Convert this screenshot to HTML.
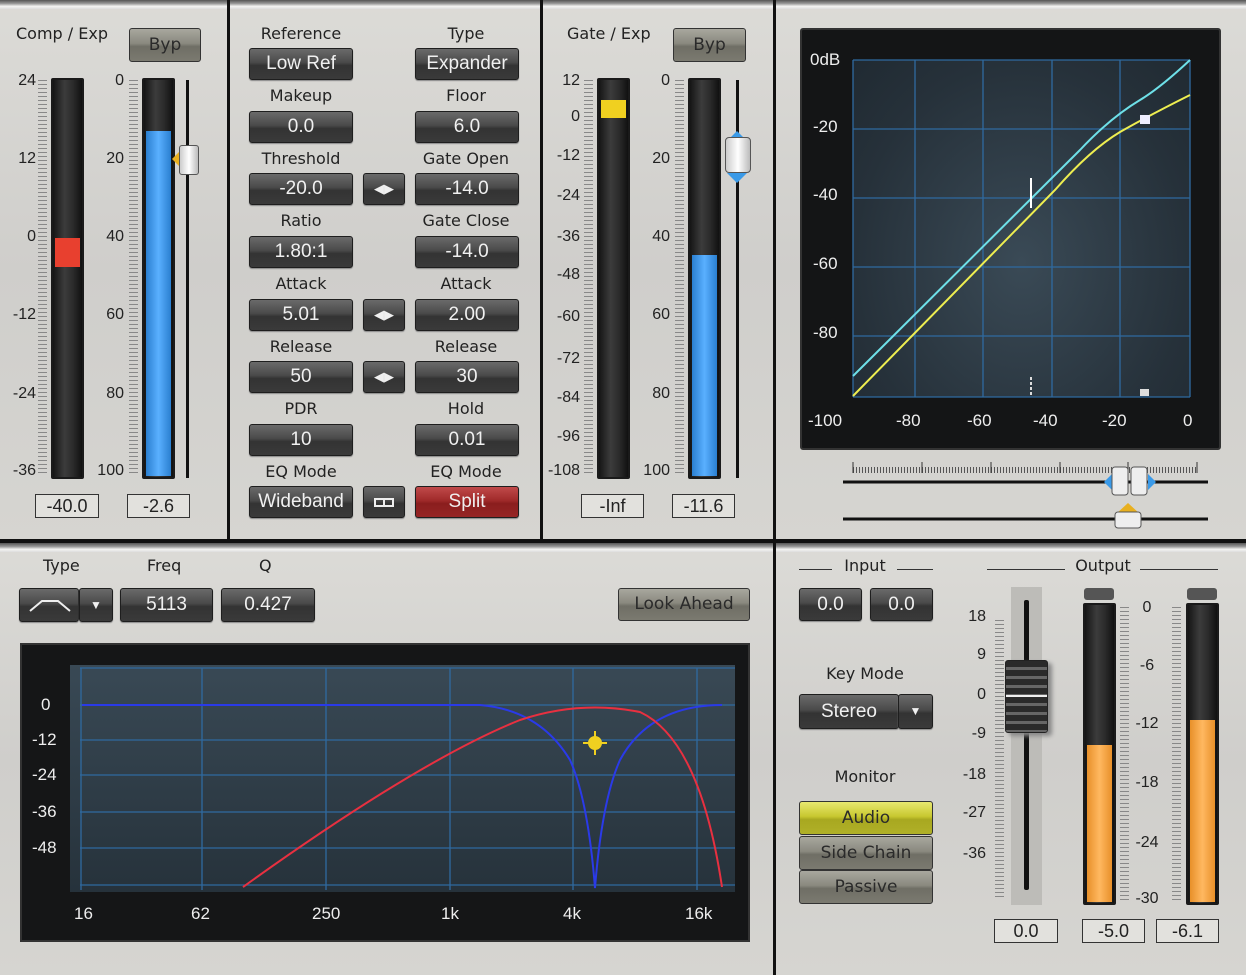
<!DOCTYPE html>
<html><head><meta charset="utf-8"><style>
*{margin:0;padding:0;box-sizing:border-box}
body{width:1246px;height:975px;overflow:hidden;background:#111;font-family:"DejaVu Sans","Liberation Sans",sans-serif;position:relative}
.a{position:absolute}
.pan{position:absolute;background:linear-gradient(180deg,#dcdbd7,#cfcecb 50%,#d6d5d1);}
.pan:before{content:"";position:absolute;left:0;right:0;top:0;height:9px;background:linear-gradient(#555,#999 40%,#f4f4f2 70%,#ddd)}
.lab{position:absolute;font-size:16px;color:#222;text-align:center;white-space:nowrap}
.btn{position:absolute;background:linear-gradient(#6a6a6a,#4a4a4a 45%,#333 55%,#3a3a3a);border:1px solid #1e1e1e;border-radius:3px;color:#f0f0f0;font-size:19px;text-align:center;font-family:"Liberation Sans",sans-serif;box-shadow:0 1px 1px #888}
.gb{position:absolute;background:linear-gradient(#a8a79e,#8a897f 45%,#6f6e65 55%,#7b7a70);border:1px solid #333;border-radius:3px;color:#2a2a2a;font-size:17px;text-align:center}
.val{position:absolute;border:1px solid #333;background:#e2e1dd;font-size:18px;text-align:center;color:#222;line-height:22px;font-family:"Liberation Sans",sans-serif}
.met{position:absolute;background:linear-gradient(90deg,#151515,#3c3c3c 40%,#2a2a2a 70%,#111);border:2px solid #1a1a1a;border-radius:2px}
.sc{position:absolute;font-size:16px;color:#222;text-align:right;width:36px;font-family:"Liberation Sans",sans-serif}
.tk{position:absolute;width:9px;background:repeating-linear-gradient(180deg,#888 0 1px,transparent 1px 4px)}
.vl{position:absolute;width:3px;background:#111}
.gl{position:absolute;color:#eee;font-size:17px;font-family:"Liberation Sans",sans-serif}
</style></head><body>

<!-- Panel 1 -->
<div class="pan" style="left:0;top:0;width:227px;height:539px"></div>
<div class="lab" style="left:16px;top:24px">Comp / Exp</div>
<div class="gb" style="left:129px;top:28px;width:72px;height:34px;line-height:32px">Byp</div>
<div class="met" style="left:51px;top:78px;width:33px;height:401px"></div>
<div class="a" style="left:55px;top:238px;width:25px;height:29px;background:#e8402f"></div>
<div class="met" style="left:142px;top:78px;width:33px;height:401px"></div>
<div class="a" style="left:146px;top:131px;width:25px;height:345px;background:linear-gradient(90deg,#2a7fd0,#5ab0ff 50%,#2a7fd0)"></div>
<div class="tk" style="left:38px;top:80px;height:396px"></div>
<div class="tk" style="left:129px;top:80px;height:396px"></div>
<div class="sc" style="left:0;top:72px">24</div><div class="sc" style="left:0;top:150px">12</div><div class="sc" style="left:0;top:228px">0</div><div class="sc" style="left:0;top:306px">-12</div><div class="sc" style="left:0;top:385px">-24</div><div class="sc" style="left:0;top:462px">-36</div>
<div class="sc" style="left:88px;top:72px">0</div><div class="sc" style="left:88px;top:150px">20</div><div class="sc" style="left:88px;top:228px">40</div><div class="sc" style="left:88px;top:306px">60</div><div class="sc" style="left:88px;top:385px">80</div><div class="sc" style="left:88px;top:462px">100</div>
<div class="vl" style="left:186px;top:80px;height:398px"></div>
<div class="a" style="left:164px;top:151px;width:0;height:0;border:8px solid transparent;border-right-color:#e8b020"></div>
<div class="a" style="left:179px;top:145px;width:20px;height:30px;background:linear-gradient(90deg,#ccc,#fff,#bbb);border:1px solid #555;border-radius:3px"></div>
<div class="val" style="left:35px;top:494px;width:64px;height:24px">-40.0</div>
<div class="val" style="left:127px;top:494px;width:63px;height:24px">-2.6</div>

<!-- Panel 2 -->
<div class="pan" style="left:230px;top:0;width:310px;height:539px"></div>
<div class="lab" style="left:251px;width:100px;top:24px">Reference</div><div class="lab" style="left:416px;width:100px;top:24px">Type</div>
<div class="btn" style="left:249px;top:48px;width:104px;height:32px;line-height:30px">Low Ref</div><div class="btn" style="left:415px;top:48px;width:104px;height:32px;line-height:30px">Expander</div>
<div class="lab" style="left:251px;width:100px;top:86px">Makeup</div><div class="lab" style="left:416px;width:100px;top:86px">Floor</div>
<div class="btn" style="left:249px;top:111px;width:104px;height:32px;line-height:30px">0.0</div><div class="btn" style="left:415px;top:111px;width:104px;height:32px;line-height:30px">6.0</div>
<div class="lab" style="left:251px;width:100px;top:149px">Threshold</div><div class="lab" style="left:416px;width:100px;top:149px">Gate Open</div>
<div class="btn" style="left:249px;top:173px;width:104px;height:32px;line-height:30px">-20.0</div><div class="btn" style="left:415px;top:173px;width:104px;height:32px;line-height:30px">-14.0</div>
<div class="lab" style="left:251px;width:100px;top:211px">Ratio</div><div class="lab" style="left:416px;width:100px;top:211px">Gate Close</div>
<div class="btn" style="left:249px;top:236px;width:104px;height:32px;line-height:30px">1.80:1</div><div class="btn" style="left:415px;top:236px;width:104px;height:32px;line-height:30px">-14.0</div>
<div class="lab" style="left:251px;width:100px;top:274px">Attack</div><div class="lab" style="left:416px;width:100px;top:274px">Attack</div>
<div class="btn" style="left:249px;top:299px;width:104px;height:32px;line-height:30px">5.01</div><div class="btn" style="left:415px;top:299px;width:104px;height:32px;line-height:30px">2.00</div>
<div class="lab" style="left:251px;width:100px;top:337px">Release</div><div class="lab" style="left:416px;width:100px;top:337px">Release</div>
<div class="btn" style="left:249px;top:361px;width:104px;height:32px;line-height:30px">50</div><div class="btn" style="left:415px;top:361px;width:104px;height:32px;line-height:30px">30</div>
<div class="lab" style="left:251px;width:100px;top:399px">PDR</div><div class="lab" style="left:416px;width:100px;top:399px">Hold</div>
<div class="btn" style="left:249px;top:424px;width:104px;height:32px;line-height:30px">10</div><div class="btn" style="left:415px;top:424px;width:104px;height:32px;line-height:30px">0.01</div>
<div class="lab" style="left:251px;width:100px;top:462px">EQ Mode</div><div class="lab" style="left:416px;width:100px;top:462px">EQ Mode</div>
<div class="btn" style="left:249px;top:486px;width:104px;height:32px;line-height:30px">Wideband</div>
<div class="btn" style="left:415px;top:486px;width:104px;height:32px;line-height:30px;background:linear-gradient(#c04a4a,#a02a2a 45%,#8a1e1e 55%,#962424)">Split</div>
<div class="btn" style="left:363px;top:173px;width:42px;height:32px;font-size:13px;line-height:30px">◀▶</div>
<div class="btn" style="left:363px;top:299px;width:42px;height:32px;font-size:13px;line-height:30px">◀▶</div>
<div class="btn" style="left:363px;top:361px;width:42px;height:32px;font-size:13px;line-height:30px">◀▶</div>
<div class="btn" style="left:363px;top:486px;width:42px;height:32px"><div class="a" style="left:10px;top:11px;width:20px;height:9px;border:2px solid #eee"></div><div class="a" style="left:19px;top:11px;width:2px;height:9px;background:#eee"></div></div>

<!-- Panel 3 -->
<div class="pan" style="left:543px;top:0;width:230px;height:539px"></div>
<div class="lab" style="left:567px;top:24px">Gate / Exp</div>
<div class="gb" style="left:673px;top:28px;width:73px;height:34px;line-height:32px">Byp</div>
<div class="met" style="left:597px;top:78px;width:33px;height:401px"></div>
<div class="a" style="left:601px;top:100px;width:25px;height:18px;background:#f0d020"></div>
<div class="met" style="left:688px;top:78px;width:33px;height:401px"></div>
<div class="a" style="left:692px;top:255px;width:25px;height:221px;background:linear-gradient(90deg,#2a7fd0,#5ab0ff 50%,#2a7fd0)"></div>
<div class="tk" style="left:584px;top:80px;height:396px"></div>
<div class="tk" style="left:675px;top:80px;height:396px"></div>
<div class="sc" style="left:544px;top:72px">12</div><div class="sc" style="left:544px;top:108px">0</div><div class="sc" style="left:544px;top:147px">-12</div><div class="sc" style="left:544px;top:187px">-24</div><div class="sc" style="left:544px;top:228px">-36</div><div class="sc" style="left:544px;top:266px">-48</div><div class="sc" style="left:544px;top:308px">-60</div><div class="sc" style="left:544px;top:350px">-72</div><div class="sc" style="left:544px;top:389px">-84</div><div class="sc" style="left:544px;top:428px">-96</div><div class="sc" style="left:544px;top:462px">-108</div>
<div class="sc" style="left:634px;top:72px">0</div><div class="sc" style="left:634px;top:150px">20</div><div class="sc" style="left:634px;top:228px">40</div><div class="sc" style="left:634px;top:306px">60</div><div class="sc" style="left:634px;top:385px">80</div><div class="sc" style="left:634px;top:462px">100</div>
<div class="vl" style="left:736px;top:80px;height:398px"></div>
<div class="a" style="left:727px;top:121px;width:0;height:0;border:10px solid transparent;border-bottom-color:#3a9ae8"></div>
<div class="a" style="left:725px;top:137px;width:26px;height:36px;background:linear-gradient(90deg,#ccc,#fff,#bbb);border:1px solid #555;border-radius:4px"></div>
<div class="a" style="left:727px;top:173px;width:0;height:0;border:10px solid transparent;border-top-color:#3a9ae8"></div>
<div class="val" style="left:581px;top:494px;width:63px;height:24px">-Inf</div>
<div class="val" style="left:672px;top:494px;width:63px;height:24px">-11.6</div>

<!-- Panel 4 -->
<div class="pan" style="left:776px;top:0;width:470px;height:539px"></div>
<div class="a" style="left:800px;top:28px;width:421px;height:422px;background:#141516;border:2px solid #333;border-radius:3px"></div>
<div class="a" style="left:853px;top:60px;width:337px;height:337px;background:radial-gradient(ellipse at 50% 60%,#3a4a56,#26313a 70%,#202a32)"></div>
<svg class="a" style="left:0;top:0" width="1246" height="540">
<g stroke="#2f6aa0" stroke-width="1.3">
<line x1="853" y1="60" x2="1190" y2="60"/><line x1="853" y1="129" x2="1190" y2="129"/><line x1="853" y1="198" x2="1190" y2="198"/><line x1="853" y1="267" x2="1190" y2="267"/><line x1="853" y1="336" x2="1190" y2="336"/><line x1="853" y1="397" x2="1190" y2="397"/>
<line x1="853" y1="60" x2="853" y2="397"/><line x1="915" y1="60" x2="915" y2="397"/><line x1="983" y1="60" x2="983" y2="397"/><line x1="1052" y1="60" x2="1052" y2="397"/><line x1="1120" y1="60" x2="1120" y2="397"/><line x1="1190" y1="60" x2="1190" y2="397"/></g>
<path d="M853 376 L1080 150 Q1110 118 1140 100 Q1160 88 1190 60" stroke="#6ee0e8" stroke-width="2" fill="none"/>
<path d="M853 396 L1055 190 Q1090 150 1120 132 Q1150 115 1190 95" stroke="#eeee50" stroke-width="2" fill="none"/>
<rect x="1140" y="115" width="10" height="9" fill="#eef"/><line x1="1031" y1="178" x2="1031" y2="208" stroke="#fff" stroke-width="2"/>
<line x1="1031" y1="377" x2="1031" y2="395" stroke="#ddd" stroke-width="2" stroke-dasharray="3 2"/><rect x="1140" y="389" width="9" height="7" fill="#ddd"/>
<line x1="853" y1="470" x2="1197" y2="470" stroke="#555" stroke-width="6" stroke-dasharray="1 2"/>
<line x1="853" y1="462" x2="853" y2="473" stroke="#333"/><line x1="922" y1="462" x2="922" y2="473" stroke="#333"/><line x1="991" y1="462" x2="991" y2="473" stroke="#333"/><line x1="1060" y1="462" x2="1060" y2="473" stroke="#333"/><line x1="1128" y1="462" x2="1128" y2="473" stroke="#333"/><line x1="1197" y1="462" x2="1197" y2="473" stroke="#333"/>
<line x1="843" y1="482" x2="1208" y2="482" stroke="#111" stroke-width="3"/>
<line x1="843" y1="519" x2="1208" y2="519" stroke="#111" stroke-width="3"/>
<path d="M1104 482 L1112 474 L1112 490Z M1156 482 L1148 474 L1148 490Z" fill="#3a9ae8"/>
<rect x="1112" y="467" width="16" height="28" rx="3" fill="#eee" stroke="#555"/><rect x="1131" y="467" width="16" height="28" rx="3" fill="#eee" stroke="#555"/>
<path d="M1128 503 L1140 514 L1116 514Z" fill="#e8b020"/><rect x="1115" y="512" width="26" height="16" rx="3" fill="#eee" stroke="#555"/>
</svg>
<div class="gl" style="left:810px;top:50px">0dB</div><div class="gl" style="left:813px;top:117px">-20</div><div class="gl" style="left:813px;top:185px">-40</div><div class="gl" style="left:813px;top:254px">-60</div><div class="gl" style="left:813px;top:323px">-80</div>
<div class="gl" style="left:808px;top:411px">-100</div><div class="gl" style="left:896px;top:411px">-80</div><div class="gl" style="left:967px;top:411px">-60</div><div class="gl" style="left:1033px;top:411px">-40</div><div class="gl" style="left:1102px;top:411px">-20</div><div class="gl" style="left:1183px;top:411px">0</div>

<!-- Bottom left -->
<div class="pan" style="left:0;top:543px;width:773px;height:432px"></div>
<div class="lab" style="left:43px;top:556px">Type</div><div class="lab" style="left:147px;top:556px">Freq</div><div class="lab" style="left:259px;top:556px">Q</div>
<div class="btn" style="left:19px;top:588px;width:60px;height:34px"><svg width="60" height="32"><path d="M10 22 L22 12 L38 12 L50 22" stroke="#eee" stroke-width="2" fill="none"/></svg></div>
<div class="btn" style="left:79px;top:588px;width:34px;height:34px;font-size:12px;line-height:32px">▼</div>
<div class="btn" style="left:120px;top:588px;width:93px;height:34px;line-height:32px">5113</div>
<div class="btn" style="left:221px;top:588px;width:94px;height:34px;line-height:32px">0.427</div>
<div class="gb" style="left:618px;top:588px;width:132px;height:33px;line-height:31px">Look Ahead</div>
<div class="a" style="left:20px;top:643px;width:730px;height:299px;background:#151617;border:2px solid #333"></div>
<div class="a" style="left:70px;top:665px;width:665px;height:227px;background:linear-gradient(#394955,#26323b)"></div>
<svg class="a" style="left:0;top:543px" width="773" height="432">
<g stroke="#2f6aa0" stroke-width="1.3" transform="translate(0,-543)">
<line x1="80" y1="668" x2="735" y2="668"/><line x1="80" y1="705" x2="735" y2="705"/><line x1="80" y1="740" x2="735" y2="740"/><line x1="80" y1="775" x2="735" y2="775"/><line x1="80" y1="812" x2="735" y2="812"/><line x1="80" y1="848" x2="735" y2="848"/><line x1="80" y1="885" x2="735" y2="885"/>
<line x1="81" y1="668" x2="81" y2="890"/><line x1="202" y1="668" x2="202" y2="890"/><line x1="326" y1="668" x2="326" y2="890"/><line x1="450" y1="668" x2="450" y2="890"/><line x1="573" y1="668" x2="573" y2="890"/><line x1="697" y1="668" x2="697" y2="890"/>
</g>
<g transform="translate(0,-543)">
<path d="M82 705 L480 705 Q540 710 570 760 Q588 800 595 888 Q602 800 620 760 Q650 705 722 705" stroke="#2a3ae8" stroke-width="2" fill="none"/>
<path d="M243 887 Q420 760 520 720 Q580 700 640 712 Q700 740 722 887" stroke="#e83040" stroke-width="2" fill="none"/>
<circle cx="595" cy="743" r="7" fill="#f0d020"/>
<g stroke="#f0d020" stroke-width="2"><line x1="595" y1="731" x2="595" y2="755"/><line x1="583" y1="743" x2="607" y2="743"/></g>
</g></svg>
<div class="gl" style="left:41px;top:695px">0</div><div class="gl" style="left:32px;top:730px">-12</div><div class="gl" style="left:32px;top:765px">-24</div><div class="gl" style="left:32px;top:802px">-36</div><div class="gl" style="left:32px;top:838px">-48</div>
<div class="gl" style="left:74px;top:904px">16</div><div class="gl" style="left:191px;top:904px">62</div><div class="gl" style="left:312px;top:904px">250</div><div class="gl" style="left:441px;top:904px">1k</div><div class="gl" style="left:563px;top:904px">4k</div><div class="gl" style="left:685px;top:904px">16k</div>

<!-- Bottom right -->
<div class="pan" style="left:776px;top:543px;width:470px;height:432px"></div>
<div class="a" style="left:799px;top:569px;width:33px;height:1px;background:#333"></div><div class="a" style="left:897px;top:569px;width:36px;height:1px;background:#333"></div>
<div class="lab" style="left:815px;width:100px;top:556px">Input</div>
<div class="a" style="left:987px;top:569px;width:78px;height:1px;background:#333"></div><div class="a" style="left:1140px;top:569px;width:78px;height:1px;background:#333"></div>
<div class="lab" style="left:1053px;width:100px;top:556px">Output</div>
<div class="btn" style="left:799px;top:588px;width:63px;height:33px;line-height:31px">0.0</div>
<div class="btn" style="left:870px;top:588px;width:63px;height:33px;line-height:31px">0.0</div>
<div class="lab" style="left:815px;width:100px;top:664px">Key Mode</div>
<div class="btn" style="left:799px;top:694px;width:100px;height:35px;line-height:33px">Stereo</div>
<div class="btn" style="left:898px;top:694px;width:35px;height:35px;font-size:12px;line-height:33px">▼</div>
<div class="lab" style="left:815px;width:100px;top:767px">Monitor</div>
<div class="gb" style="left:799px;top:801px;width:134px;height:34px;line-height:32px;background:linear-gradient(#e8e870,#c8c830 45%,#a8a820 55%,#b0b028)">Audio</div>
<div class="gb" style="left:799px;top:836px;width:134px;height:34px;line-height:32px">Side Chain</div>
<div class="gb" style="left:799px;top:870px;width:134px;height:34px;line-height:32px">Passive</div>
<div class="a" style="left:1011px;top:587px;width:31px;height:318px;background:#bdbcb8"></div>
<div class="vl" style="left:1024px;top:600px;width:5px;height:290px;border-radius:2px"></div>
<div class="tk" style="left:995px;top:620px;height:280px"></div>
<div class="sc" style="left:950px;top:608px">18</div><div class="sc" style="left:950px;top:646px">9</div><div class="sc" style="left:950px;top:686px">0</div><div class="sc" style="left:950px;top:725px">-9</div><div class="sc" style="left:950px;top:766px">-18</div><div class="sc" style="left:950px;top:804px">-27</div><div class="sc" style="left:950px;top:845px">-36</div>
<div class="a" style="left:1005px;top:660px;width:43px;height:73px;background:repeating-linear-gradient(#2a2a2a 0 6px,#666 6px 9px);border:1px solid #222;border-radius:3px;box-shadow:4px 3px 4px #888"></div>
<div class="a" style="left:1006px;top:695px;width:41px;height:2px;background:#eee"></div>
<div class="a" style="left:1084px;top:588px;width:30px;height:12px;background:#555;border-radius:3px"></div>
<div class="a" style="left:1187px;top:588px;width:30px;height:12px;background:#555;border-radius:3px"></div>
<div class="met" style="left:1083px;top:603px;width:33px;height:302px"></div>
<div class="a" style="left:1087px;top:745px;width:25px;height:157px;background:linear-gradient(90deg,#e8902a,#ffb860 50%,#e8902a)"></div>
<div class="met" style="left:1186px;top:603px;width:33px;height:302px"></div>
<div class="a" style="left:1190px;top:720px;width:25px;height:182px;background:linear-gradient(90deg,#e8902a,#ffb860 50%,#e8902a)"></div>
<div class="tk" style="left:1120px;top:607px;height:295px"></div><div class="tk" style="left:1172px;top:607px;height:295px"></div>
<div class="sc" style="left:1127px;top:599px;text-align:center;width:40px">0</div><div class="sc" style="left:1127px;top:657px;text-align:center;width:40px">-6</div><div class="sc" style="left:1127px;top:715px;text-align:center;width:40px">-12</div><div class="sc" style="left:1127px;top:774px;text-align:center;width:40px">-18</div><div class="sc" style="left:1127px;top:834px;text-align:center;width:40px">-24</div><div class="sc" style="left:1127px;top:890px;text-align:center;width:40px">-30</div>
<div class="val" style="left:994px;top:919px;width:64px;height:24px">0.0</div>
<div class="val" style="left:1082px;top:919px;width:63px;height:24px">-5.0</div>
<div class="val" style="left:1156px;top:919px;width:63px;height:24px">-6.1</div>
</body></html>
